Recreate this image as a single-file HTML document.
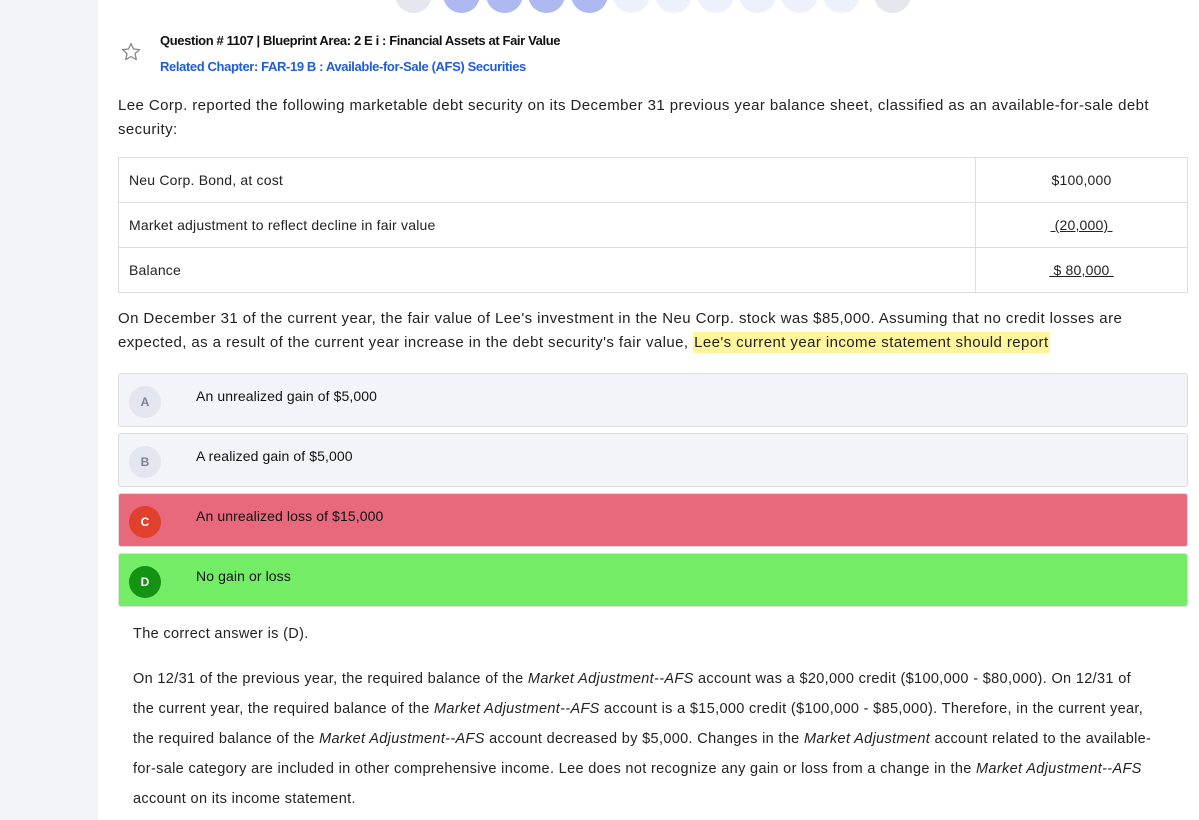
<!DOCTYPE html>
<html><head><meta charset="utf-8"><style>
*{margin:0;padding:0;box-sizing:border-box}
body{width:1199px;height:820px;overflow:hidden;background:#fff;font-family:"Liberation Sans",sans-serif;color:#222;position:relative}
.side{position:absolute;left:0;top:0;width:98px;height:820px;background:#f3f4f9}
.c{position:absolute;top:-24px;width:37px;height:37px;border-radius:50%}
.t{position:absolute;white-space:nowrap}
.q{font-size:15px;color:#222;letter-spacing:.42px}
table{position:absolute;left:118px;top:157px;width:1070px;border-collapse:collapse;font-size:14px}
td{border:1px solid #ddd;height:45px;padding:0 10px;color:#222;letter-spacing:.2px}
td.r{width:212px;text-align:center}
u{text-decoration:underline;color:#222}
.opt{position:absolute;left:118px;width:1070px;height:54px;border:1px solid #ddd;border-radius:3px;background:#f3f4f9}
.opt .b{position:absolute;left:10px;top:12px;width:32px;height:32px;border-radius:50%;background:#e4e6ef;color:#7b8196;font-weight:bold;font-size:12px;text-align:center;line-height:32px}
.opt .x{position:absolute;left:77px;top:14px;font-size:14px;color:#111;letter-spacing:.1px}
.e{font-size:14.5px;color:#222;letter-spacing:.34px}
</style></head><body>
<div class="side"></div>
<div class="c" style="left:395px;background:#e5e6ee"></div>
<div class="c" style="left:443px;background:#aeb9f2"></div>
<div class="c" style="left:486px;background:#aeb9f2"></div>
<div class="c" style="left:528px;background:#aeb9f2"></div>
<div class="c" style="left:571px;background:#aeb9f2"></div>
<div class="c" style="left:613px;background:#eef0fc"></div>
<div class="c" style="left:655px;background:#eef0fc"></div>
<div class="c" style="left:697px;background:#eef0fc"></div>
<div class="c" style="left:739px;background:#eef0fc"></div>
<div class="c" style="left:781px;background:#eef0fc"></div>
<div class="c" style="left:823px;background:#eef0fc"></div>
<div class="c" style="left:874px;background:#e5e6ee"></div>
<svg style="position:absolute;left:121px;top:42px" width="20" height="20" viewBox="0 0 20 20"><path d="M10 1.5l2.5 5.5 6 .6-4.5 4 1.3 6-5.3-3.1-5.3 3.1 1.3-6-4.5-4 6-.6z" fill="none" stroke="#888" stroke-width="1.3" stroke-linejoin="round"/></svg>
<div class="t" style="left:160px;top:33px;font-size:13px;font-weight:bold;color:#111;letter-spacing:-.38px">Question # 1107 | Blueprint Area: 2 E i : Financial Assets at Fair Value</div>
<div class="t" style="left:160px;top:59px;font-size:13px;font-weight:bold;color:#1f5ce0;letter-spacing:-.38px">Related Chapter: FAR-19 B : Available-for-Sale (AFS) Securities</div>
<div class="t q" style="left:118px;top:97px">Lee Corp. reported the following marketable debt security on its December 31 previous year balance sheet, classified as an available-for-sale debt</div>
<div class="t q" style="left:118px;top:121px">security:</div>
<table>
<tr><td>Neu Corp. Bond, at cost</td><td class="r">$100,000</td></tr>
<tr><td>Market adjustment to reflect decline in fair value</td><td class="r"><u>&nbsp;(20,000)&nbsp;</u></td></tr>
<tr><td>Balance</td><td class="r"><u>&nbsp;$ 80,000&nbsp;</u></td></tr>
</table>
<div class="t q" style="left:118px;top:310px">On December 31 of the current year, the fair value of Lee's investment in the Neu Corp. stock was $85,000. Assuming that no credit losses are</div>
<div class="t q" style="left:118px;top:334px">expected, as a result of the current year increase in the debt security's fair value, <span style="background:#fff59d;padding:2px 1px">Lee's current year income statement should report</span></div>
<div class="opt" style="top:373px"><div class="b">A</div><div class="x">An unrealized gain of $5,000</div></div>
<div class="opt" style="top:433px"><div class="b">B</div><div class="x">A realized gain of $5,000</div></div>
<div class="opt" style="top:493px;background:#e8687c"><div class="b" style="background:#e0402c;color:#fff">C</div><div class="x">An unrealized loss of $15,000</div></div>
<div class="opt" style="top:553px;background:#74ed66"><div class="b" style="background:#139213;color:#fff">D</div><div class="x">No gain or loss</div></div>
<div class="t e" style="left:133px;top:626px">The correct answer is (D).</div>
<div class="t e" style="left:133px;top:671px">On 12/31 of the previous year, the required balance of the <i>Market Adjustment--AFS</i> account was a $20,000 credit ($100,000 - $80,000). On 12/31 of</div>
<div class="t e" style="left:133px;top:701px">the current year, the required balance of the <i>Market Adjustment--AFS</i> account is a $15,000 credit ($100,000 - $85,000). Therefore, in the current year,</div>
<div class="t e" style="left:133px;top:731px">the required balance of the <i>Market Adjustment--AFS</i> account decreased by $5,000. Changes in the <i>Market Adjustment</i> account related to the available-</div>
<div class="t e" style="left:133px;top:761px">for-sale category are included in other comprehensive income. Lee does not recognize any gain or loss from a change in the <i>Market Adjustment--AFS</i></div>
<div class="t e" style="left:133px;top:791px">account on its income statement.</div>
</body></html>
